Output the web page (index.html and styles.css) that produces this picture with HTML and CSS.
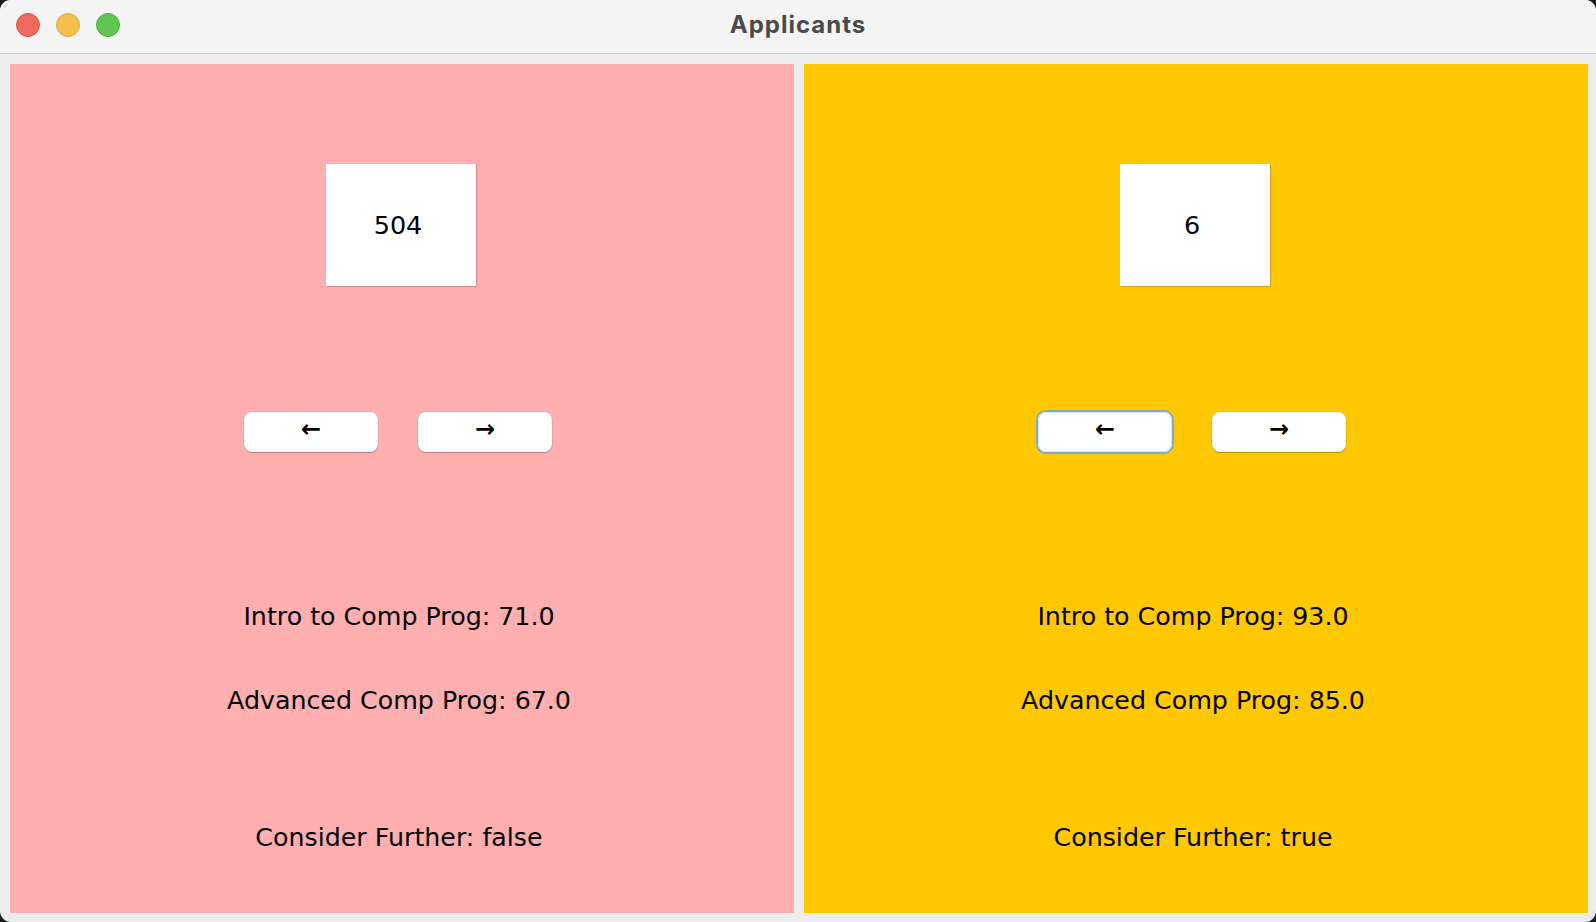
FILE: index.html
```html
<!DOCTYPE html>
<html>
<head>
<meta charset="utf-8">
<link rel="stylesheet" href="styles.css">
</head>
<body>
<div class="window">
  <div class="titlebar">
    <div class="lights">
      <span class="light red"></span>
      <span class="light yellow"></span>
      <span class="light green"></span>
    </div>
    <div class="title">Applicants</div>
  </div>
  <div class="content">
    <div class="panel pink">
      <div class="idbox">504</div>
      <div class="buttons">
        <button class="btn">&#8592;</button>
        <button class="btn">&#8594;</button>
      </div>
      <div class="line first">Intro to Comp Prog: 71.0</div>
      <div class="line second">Advanced Comp Prog: 67.0</div>
      <div class="line third">Consider Further: false</div>
    </div>
    <div class="panel orange">
      <div class="idbox">6</div>
      <div class="buttons">
        <button class="btn focused">&#8592;</button>
        <button class="btn">&#8594;</button>
      </div>
      <div class="line first">Intro to Comp Prog: 93.0</div>
      <div class="line second">Advanced Comp Prog: 85.0</div>
      <div class="line third">Consider Further: true</div>
    </div>
  </div>
</div>
</body>
</html>
```
FILE: styles.css
```css
html, body {
  margin: 0;
  padding: 0;
  width: 1596px;
  height: 922px;
  background: #1c1c1c;
  overflow: hidden;
}
.window {
  width: 1596px;
  height: 922px;
  background: #ededed;
  border-radius: 11px;
  overflow: hidden;
  display: flex;
  flex-direction: column;
  font-family: "DejaVu Sans", sans-serif;
}
.titlebar {
  height: 53px;
  background: #f3f4f3;
  border-bottom: 1px solid #c9c9c9;
  position: relative;
  display: flex;
  align-items: center;
  justify-content: center;
  flex: none;
}
.lights {
  position: absolute;
  left: 16px;
  top: 13px;
  display: flex;
  gap: 16px;
}
.light {
  width: 24px;
  height: 24px;
  border-radius: 50%;
  box-sizing: border-box;
}
.red { background: #ee6a5f; border: 1px solid #d9574c; }
.yellow { background: #f5bf4f; border: 1px solid #dea83a; }
.green { background: #61c554; border: 1px solid #4eae42; }
.title {
  font-family: "Inter", "Liberation Sans", sans-serif;
  font-weight: 700;
  font-size: 24px;
  letter-spacing: 1px;
  color: #4a4a4a;
  margin-left: 0px;
  margin-bottom: 4px;
}
.content {
  flex: 1;
  display: flex;
  gap: 10px;
  padding: 10px 8px 9px 10px;
}
.panel {
  width: 784px;
  height: 849px;
  display: flex;
  flex-direction: column;
  align-items: center;
  color: #000;
}
.pink { background: #ffafaf; }
.orange { background: #ffc800; }
.idbox {
  margin-top: 100px;
  width: 150px;
  height: 122px;
  background: #fff;
  box-shadow: 1px 1px 1px rgba(150,90,90,0.35);
  display: flex;
  align-items: center;
  justify-content: center;
  font-size: 25.5px;
  margin-left: -2px;
  padding-right: 6px;
  box-sizing: border-box;
}
.buttons {
  margin-top: 126px;
  display: flex;
  gap: 40px;
  margin-right: 8px;
}
.btn {
  width: 134px;
  height: 40px;
  border: none;
  border-radius: 8px;
  background: #fff;
  box-shadow: 0 1px 1px rgba(0,0,0,0.25), 0 0 0 0.5px rgba(0,0,0,0.08);
  font-family: "DejaVu Sans", sans-serif;
  font-size: 24px;
  font-weight: 700;
  color: #000;
  padding: 0 0 6px 0;
  display: flex;
  align-items: center;
  justify-content: center;
}
.btn.focused {
  box-shadow: 0 0 0 2px #85a8c4, inset 0 0 0 1px #d5e6f5;
}
.line {
  font-size: 25.3px;
  line-height: 30px;
  height: 30px;
  margin-right: 6px;
}
.first { margin-top: 150px; }
.second { margin-top: 54px; }
.third { margin-top: 107px; }
```
